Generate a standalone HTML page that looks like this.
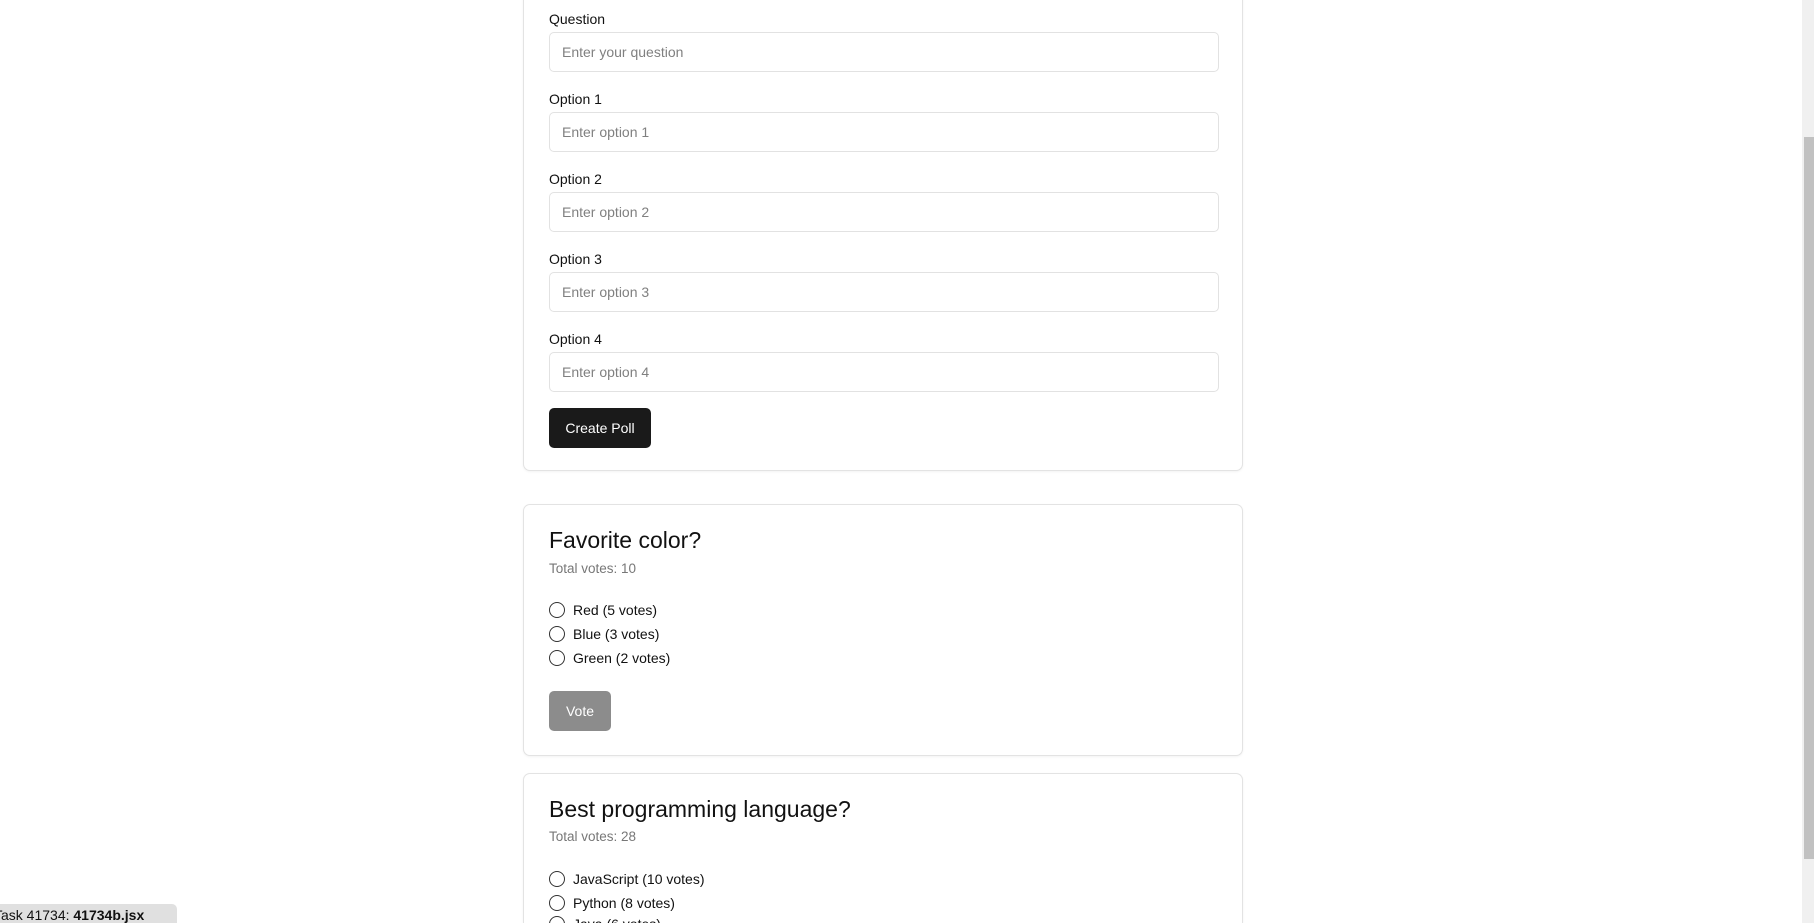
<!DOCTYPE html>
<html><head><meta charset="utf-8"><style>
*{box-sizing:border-box;margin:0;padding:0}
html,body{width:1814px;height:923px;overflow:hidden;background:#fff;font-family:"Liberation Sans",sans-serif;color:#111;position:relative}
.card{position:absolute;left:523px;width:720px;border:1px solid #e3e3e3;border-radius:7px;background:#fff;box-shadow:0 1px 2px rgba(0,0,0,.05);overflow:hidden}
.lbl{position:absolute;left:25px;font-size:14px;color:#111}
.inp{position:absolute;left:25px;width:670px;height:40px;border:1px solid #e2e2e2;border-radius:5px;font-size:14px;color:#808080;padding:11px 12px;line-height:16px}
.btn{position:absolute;left:25px;height:40px;border-radius:5px;color:#fff;font-size:14px;line-height:40px;text-align:center}
h2{position:absolute;left:25px;font-size:23px;font-weight:normal;color:#111}
.tv{position:absolute;left:25px;font-size:13.5px;color:#777}
.r{position:absolute;left:25px;font-size:14px;line-height:16px;display:flex;align-items:center;white-space:nowrap}
.r i{display:inline-block;width:16px;height:16px;border:1.5px solid #333;border-radius:50%;margin-right:8px}
</style></head><body>
<div class="card" style="top:-10px;height:481px">
 <div class="lbl" style="top:20px">Question</div>
 <div class="inp" style="top:41px">Enter your question</div>
 <div class="lbl" style="top:100px">Option 1</div>
 <div class="inp" style="top:121px">Enter option 1</div>
 <div class="lbl" style="top:180px">Option 2</div>
 <div class="inp" style="top:201px">Enter option 2</div>
 <div class="lbl" style="top:260px">Option 3</div>
 <div class="inp" style="top:281px">Enter option 3</div>
 <div class="lbl" style="top:340px">Option 4</div>
 <div class="inp" style="top:361px">Enter option 4</div>
 <div class="btn" style="top:417px;width:102px;background:#1a1a1a">Create Poll</div>
</div>
<div class="card" style="top:504px;height:252px">
 <h2 style="top:22px">Favorite color?</h2>
 <div class="tv" style="top:56px">Total votes: 10</div>
 <div class="r" style="top:97px"><i></i>Red (5 votes)</div>
 <div class="r" style="top:121px"><i></i>Blue (3 votes)</div>
 <div class="r" style="top:145px"><i></i>Green (2 votes)</div>
 <div class="btn" style="top:186px;width:62px;background:#8c8c8c">Vote</div>
</div>
<div class="card" style="top:773px;height:150px;border-bottom:none;border-radius:7px 7px 0 0">
 <h2 style="top:22px">Best programming language?</h2>
 <div class="tv" style="top:55px">Total votes: 28</div>
 <div class="r" style="top:97px"><i></i>JavaScript (10 votes)</div>
 <div class="r" style="top:121px"><i></i>Python (8 votes)</div>
 <div class="r" style="top:142px"><i></i>Java (6 votes)</div>
</div>
<div style="position:absolute;left:0;top:904px;width:177px;height:19px;background:#e0e0e0;border-radius:0 5px 0 0;font-size:14px;line-height:22px;white-space:nowrap;overflow:hidden;text-indent:-6px">Task 41734: <b>41734b.jsx</b></div>
<div style="position:absolute;right:0;top:0;width:12px;height:923px;background:#f0f0f0"></div>
<div style="position:absolute;right:0;top:137px;width:10px;height:722px;background:#c1c1c1"></div>
</body></html>
